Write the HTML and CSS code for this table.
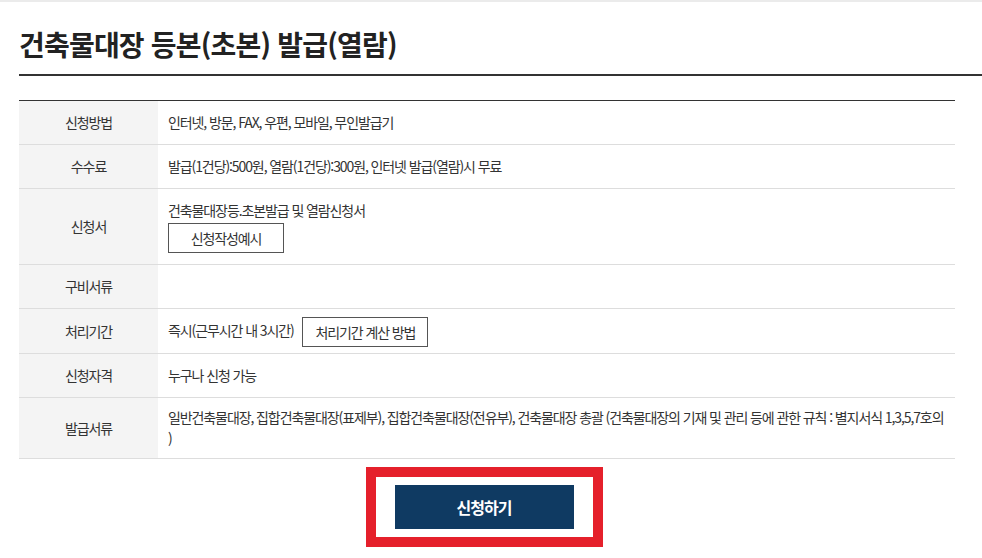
FILE: index.html
```html
<!DOCTYPE html>
<html lang="ko">
<head>
    <meta charset="utf-8">
    <title>건축물대장 등본(초본) 발급(열람)</title>
    <meta name="viewport" content="width=device-width, initial-scale=1.0">
    <link rel="stylesheet" href="styles.css">
</head>
<body>
    <div class="page">
        <h1 class="page-title">건축물대장 등본(초본) 발급(열람)</h1>

        <table class="info-table">
            <tr>
                <th>신청방법</th>
                <td>인터넷, 방문, FAX, 우편, 모바일, 무인발급기</td>
            </tr>
            <tr>
                <th>수수료</th>
                <td>발급(1건당):500원, 열람(1건당):300원, 인터넷 발급(열람)시 무료</td>
            </tr>
            <tr>
                <th>신청서</th>
                <td>
                    <div>건축물대장등.초본발급 및 열람신청서</div>
                    <a class="btn-line btn-sample" href="#">신청작성예시</a>
                </td>
            </tr>
            <tr>
                <th>구비서류</th>
                <td></td>
            </tr>
            <tr>
                <th>처리기간</th>
                <td>즉시(근무시간 내 3시간) <a class="btn-line btn-inline" href="#">처리기간 계산 방법</a></td>
            </tr>
            <tr>
                <th>신청자격</th>
                <td>누구나 신청 가능</td>
            </tr>
            <tr class="row-last">
                <th>발급서류</th>
                <td>일반건축물대장, 집합건축물대장(표제부), 집합건축물대장(전유부), 건축물대장 총괄 (건축물대장의 기재 및 관리 등에 관한 규칙 : 별지서식 1,3,5,7호의 )</td>
            </tr>
        </table>

        <div class="apply-area">
            <div class="apply-mark">
                <a class="btn-apply" href="#">신청하기</a>
            </div>
        </div>
    </div>
</body>
</html>
```

FILE: styles.css
```css
body {
    margin: 0;
    font-family: "Noto Sans CJK KR", "Noto Sans", sans-serif;
    color: #333;
    background: #fff;
    border-top: 2px solid #ebebeb;
}
.page {
    padding-left: 19px;
}
.page-title {
    margin: 0;
    padding: 22px 0 10px;
    font-size: 28px;
    line-height: 40px;
    font-weight: 700;
    letter-spacing: -0.8px;
    color: #222;
    border-bottom: 2px solid #333;
}
.info-table {
    width: 936px;
    margin-top: 24px;
    border-collapse: collapse;
    border-top: 1px solid #333;
    border-bottom: 1px solid #333;
    font-size: 14px;
    line-height: 21px;
    letter-spacing: -1.1px;
    word-break: keep-all;
}
.info-table th {
    width: 119px;
    padding: 11px 10px;
    background: #f4f4f4;
    font-weight: 400;
    color: #333;
    text-align: center;
    vertical-align: middle;
    border-bottom: 1px solid #ddd;
}
.info-table td {
    padding: 11px 10px;
    color: #333;
    text-align: left;
    vertical-align: middle;
    border-bottom: 1px solid #ddd;
}
.info-table .row-last th,
.info-table .row-last td {
    padding-top: 9px;
    padding-bottom: 9px;
}
.btn-line {
    display: inline-block;
    box-sizing: border-box;
    height: 30px;
    line-height: 28px;
    border: 1px solid #555;
    color: #333;
    text-decoration: none;
    text-align: center;
    background: #fff;
}
.btn-sample {
    width: 116px;
    margin-top: 2px;
}
.btn-inline {
    width: 126px;
    margin: -5px 0 -5px 6px;
    vertical-align: middle;
}
.apply-area {
    width: 930px;
    margin-top: 8px;
    text-align: center;
}
.apply-mark {
    display: inline-block;
    padding: 8px 19px;
    border: 10px solid #e5202b;
}
.btn-apply {
    display: block;
    width: 179px;
    height: 44px;
    line-height: 44px;
    background: #0f3a62;
    color: #fff;
    font-size: 16px;
    font-weight: 700;
    letter-spacing: -1px;
    text-decoration: none;
}
```
